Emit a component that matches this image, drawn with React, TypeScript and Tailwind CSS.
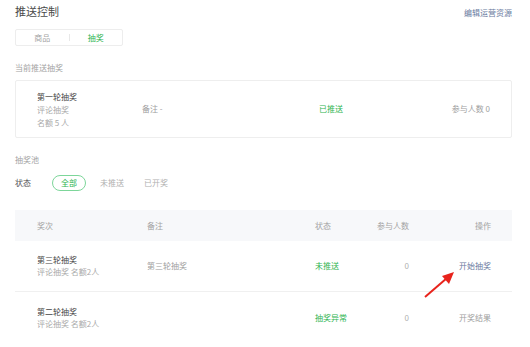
import React from "react";

const green = "text-[#2eb451]";

function Arrow() {
  return (
    <svg className="absolute left-[420px] top-[266px]" width="40" height="36" viewBox="0 0 40 36">
      <line x1="5" y1="31" x2="27" y2="12" stroke="#e8231c" strokeWidth="2" />
      <polygon points="34,6 22,10 29,18" fill="#e8231c" />
    </svg>
  );
}

export default function App() {
  const rows = [
    { name: "第三轮抽奖", note: "第三轮抽奖", status: "未推送", op: "开始抽奖", opCls: "text-[#6a7aa0]" },
    { name: "第二轮抽奖", note: "", status: "抽奖异常", op: "开奖结果", opCls: "text-[#a0a0a0]" },
  ];

  return (
    <div
      className="relative w-[530px] h-[347px] bg-white overflow-hidden text-[8px] leading-[12px] text-[#444]"
      style={{ fontFamily: '"Noto Sans CJK SC", "Noto Sans", sans-serif' }}
    >
      <div className="pl-[15px] pr-[18px]">
        {/* header */}
        <div className="flex items-start justify-between pt-[4px]">
          <h1 className="text-[11px] leading-[14px] text-[#4a4a4a]">推送控制</h1>
          <a className="text-[8px] leading-[10px] mt-[4px] text-[#6a7aa0]">编辑运营资源</a>
        </div>

        {/* tabs */}
        <div className="mt-[11px] flex items-center w-[108px] h-[17px] border border-[#ededed] rounded-[2px]">
          <div className="flex-1 text-center text-[#a3a3a3]">商品</div>
          <div className="w-px h-[7px] bg-[#e8e8e8]" />
          <div className={`flex-1 text-center ${green}`}>抽奖</div>
        </div>

        <div className="mt-[16px] text-[#a3a3a3]">当前推送抽奖</div>

        {/* current card */}
        <div className="mt-[6px] h-[58px] border border-[#eeeeee] rounded-[2px] flex items-center pl-[21px] pr-[21px]">
          <div className="w-[105px] leading-[13px]">
            <div className="text-[#444]">第一轮抽奖</div>
            <div className="text-[#aaa]">评论抽奖</div>
            <div className="text-[#aaa]">名额 5 人</div>
          </div>
          <div className="w-[177px] text-[#a0a0a0]">备注 -</div>
          <div className={`flex-1 ${green}`}>已推送</div>
          <div className="text-[#a0a0a0]">参与人数 0</div>
        </div>

        <div className="mt-[16px] text-[#a3a3a3]">抽奖池</div>

        {/* filter */}
        <div className="mt-[9px] flex items-center">
          <span className="w-[37px] text-[#555]">状态</span>
          <span className={`h-[16px] w-[34px] flex items-center justify-center rounded-full border border-[#7dd69a] ${green}`}>全部</span>
          <span className="ml-[14px] text-[#b0b0b0]">未推送</span>
          <span className="ml-[20px] text-[#b0b0b0]">已开奖</span>
        </div>

        {/* table */}
        <div className="mt-[19px]">
          <div className="h-[31px] bg-[#f7f8fa] flex items-center pl-[22px] pr-[21px] text-[#a3a3a3]">
            <div className="w-[110px]">奖次</div>
            <div className="w-[168px]">备注</div>
            <div className="w-[50px]">状态</div>
            <div className="w-[44px] text-right">参与人数</div>
            <div className="flex-1 text-right">操作</div>
          </div>
          {rows.map((r, i) => (
            <div
              key={r.name}
              className={`h-[51px] flex items-center pl-[22px] pr-[21px] ${i === 0 ? "border-b border-[#f0f0f0]" : ""}`}
            >
              <div className="w-[110px]">
                <div className="text-[#444]">{r.name}</div>
                <div className="text-[#aaa]">评论抽奖 名额2人</div>
              </div>
              <div className="w-[168px] text-[#a0a0a0]">{r.note}</div>
              <div className={`w-[50px] ${green}`}>{r.status}</div>
              <div className="w-[44px] text-right text-[#b0b0b0]">0</div>
              <div className={`flex-1 text-right ${r.opCls}`}>{r.op}</div>
            </div>
          ))}
        </div>
      </div>
      <Arrow />
    </div>
  );
}
